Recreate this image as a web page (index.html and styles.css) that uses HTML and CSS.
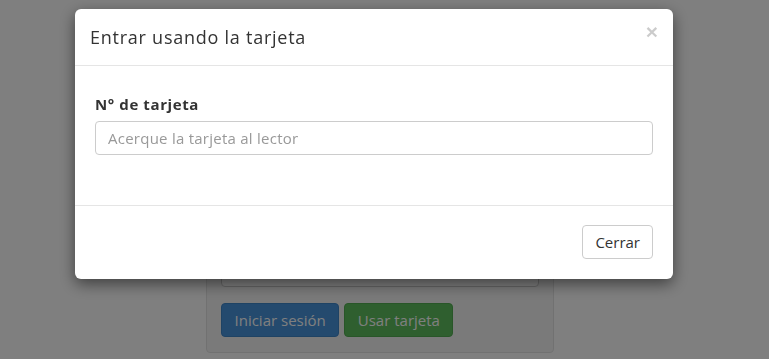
FILE: index.html
```html
<!DOCTYPE html>
<html lang="es">
<head>
    <meta charset="UTF-8">
    <meta name="viewport" content="width=device-width, initial-scale=1.0">
    <title>Iniciar sesión</title>
    <link rel="stylesheet" href="styles.css">
</head>
<body>

    <div class="login-panel">
        <input type="text" class="form-control">
        <div class="actions">
            <button class="btn btn-primary">Iniciar sesión</button>
            <button class="btn btn-success">Usar tarjeta</button>
        </div>
    </div>

    <div class="modal-backdrop"></div>

    <div class="modal">
        <div class="modal-content">
            <div class="modal-header">
                <button class="close">&times;</button>
                <h4 class="modal-title">Entrar usando la tarjeta</h4>
            </div>
            <div class="modal-body">
                <label for="tarjeta">N° de tarjeta</label>
                <input type="text" id="tarjeta" class="form-control" placeholder="Acerque la tarjeta al lector">
            </div>
            <div class="modal-footer">
                <button class="btn btn-default">Cerrar</button>
            </div>
        </div>
    </div>

</body>
</html>
```

FILE: styles.css
```css
body {
    margin: 0;
    font-family: "Open Sans", sans-serif;
    font-size: 14px;
    color: #333;
    background-color: #fff;
    height: 359px;
    overflow: hidden;
}
.login-panel {
    width: 318px;
    margin: 252px 0 0 206px;
    padding: 0 14px 15px;
    background-color: #f5f5f5;
    border: 1px solid #e3e3e3;
    border-radius: 4px;
}
.login-panel .form-control {
    height: 34px;
    margin-bottom: 16px;
}
.login-panel .btn {
    padding: 0 12.5px;
}
.actions {
    display: flex;
    gap: 5px;
}
.form-control {
    display: block;
    width: 100%;
    box-sizing: border-box;
    height: 34px;
    padding: 6px 12px;
    font-family: inherit;
    font-size: 15px;
    letter-spacing: 0.25px;
    color: #555;
    background-color: #fff;
    border: 1px solid #ccc;
    border-radius: 4px;
}
.form-control::placeholder {
    color: #999;
}
.btn {
    height: 34px;
    padding: 0 12px;
    font-family: inherit;
    font-size: 15px;
    border: 1px solid transparent;
    border-radius: 4px;
    cursor: pointer;
}
.btn-primary {
    background-color: #4894dc;
    border-color: #3f86c9;
    color: #fff;
}
.btn-success {
    background-color: #5ebe5e;
    border-color: #52ad52;
    color: #fff;
}
.btn-default {
    background-color: #fff;
    border-color: #ccc;
    color: #333;
}
.modal-backdrop {
    position: fixed;
    inset: 0;
    background-color: rgba(0, 0, 0, 0.5);
}
.modal {
    position: fixed;
    top: 9px;
    left: 75px;
    width: 598px;
}
.modal-content {
    background-color: #fff;
    border-radius: 6px;
    box-shadow: 0 5px 15px rgba(0, 0, 0, 0.5);
}
.modal-header {
    padding: 15px;
    border-bottom: 1px solid #e5e5e5;
}
.modal-title {
    margin: 0;
    font-size: 18px;
    font-weight: normal;
    letter-spacing: 0.75px;
    line-height: 26px;
}
.close {
    float: right;
    margin-top: -3px;
    padding: 0;
    background: none;
    border: none;
    font-size: 21px;
    font-weight: bold;
    line-height: 1;
    color: #000;
    opacity: 0.2;
}
.modal-body {
    padding: 28px 20px 50px;
}
.modal-body label {
    display: block;
    margin-bottom: 7px;
    font-size: 15px;
    font-weight: bold;
    letter-spacing: 0.6px;
}
.modal-footer {
    padding: 19px 20px 20px;
    border-top: 1px solid #e5e5e5;
    text-align: right;
}
```
